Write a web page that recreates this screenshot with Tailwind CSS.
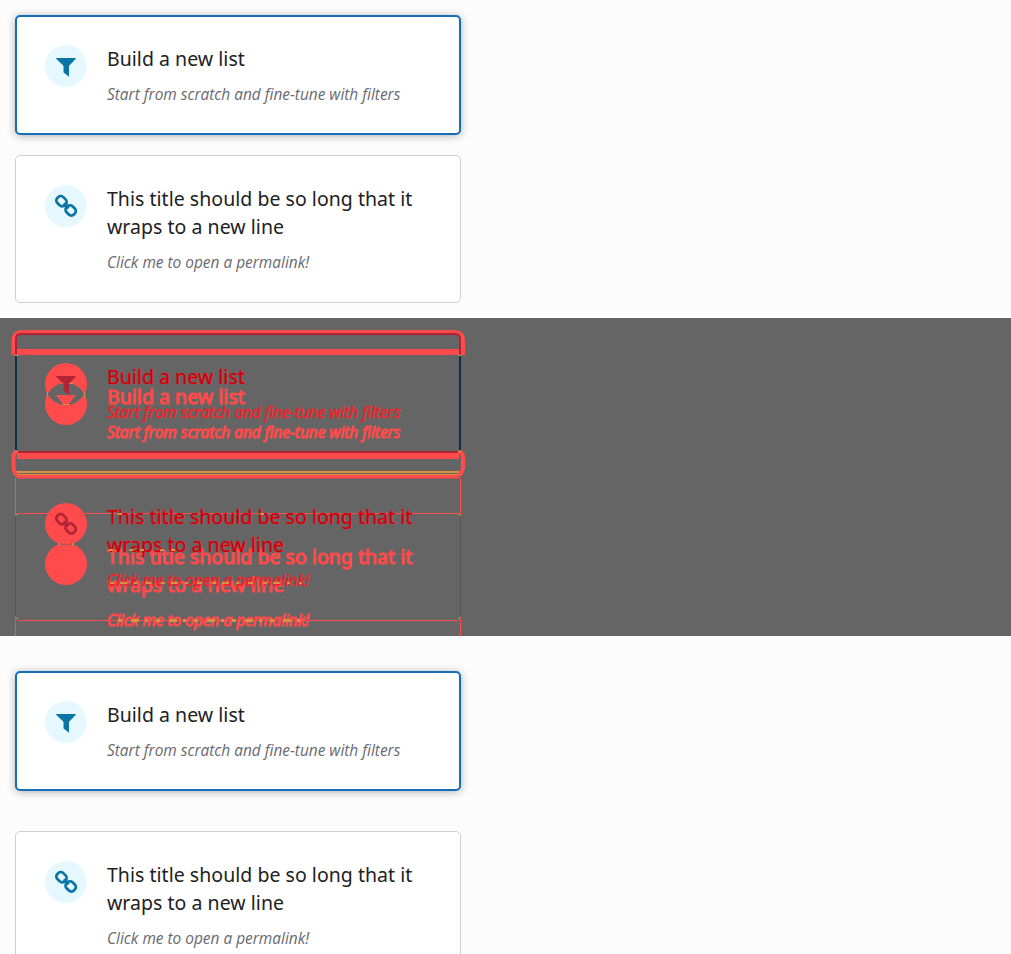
<!DOCTYPE html>
<html lang="en">
<head>
<meta charset="utf-8">
<title>List cards</title>
<script src="https://cdn.jsdelivr.net/npm/@tailwindcss/browser@4"></script>
</head>
<body class="bg-[#fcfcfc] font-['Open_Sans',sans-serif] text-[#212121]">
<svg class="hidden">
  <symbol id="funnel" viewBox="0 0 42 42"><path d="M11.300 13h19.400v1L24 20.800V31.800l-5.500-4.300V20.800L11.300 14z"/></symbol>
  <symbol id="chain" viewBox="0 0 42 42"><g fill="none" stroke="currentColor" stroke-width="2.700" transform="rotate(45 21 21)"><rect x="9.200" y="16.600" width="10.400" height="8.400" rx="3.600"/><rect x="22.200" y="16.600" width="10.400" height="8.400" rx="3.600"/><path d="M17.500 20.800h7"/></g></symbol>
</svg>
<main class="flex h-[954px] flex-col overflow-hidden">
  <section class="flex h-[318px] shrink-0 flex-col gap-5 p-[15px]">
    <article class="flex h-[120px] w-[446px] shrink-0 gap-5 rounded-[5px] border-2 border-[#146fb8] bg-white p-7 shadow-[0_1px_8px_rgba(0,0,0,0.3)]">
      <svg class="size-[42px] shrink-0 rounded-full bg-[#e6f8ff] fill-[#0875a5]"><use href="#funnel"/></svg>
      <div><h2 class="font-['Noto_Sans',sans-serif] text-[19.5px] leading-7 tracking-[0.03px]">Build a new list</h2><p class="mt-[11px] text-[15.43px] leading-[21px] text-[#686870] italic">Start from scratch and fine-tune with filters</p></div>
    </article>
    <article class="flex h-[148px] w-[446px] shrink-0 gap-5 rounded-[5px] border border-[#cfcfd1] bg-white p-[29px]">
      <svg class="size-[42px] shrink-0 rounded-full bg-[#e6f8ff] text-[#0875a5]"><use href="#chain"/></svg>
      <div><h2 class="font-['Noto_Sans',sans-serif] text-[19.5px] leading-7 tracking-[0.03px]">This title should be so long that it<br>wraps to a new line</h2><p class="mt-[11px] text-[15.43px] leading-[21px] text-[#686870] italic">Click me to open a permalink!</p></div>
    </article>
  </section>

  <section class="relative h-[318px] shrink-0 overflow-hidden bg-[#656565]">
    <!-- Changed edges of the overlaid cards -->
    <svg class="absolute inset-0" width="480" height="318" fill="none">
      <g stroke="#ff4b4b">
        <path stroke-width="4" d="M13.500 37V23q0-9 9-9H454q9 0 9 9v14M17 133q-3.500 2-3.500 6v9q0 8 6 10.500M459 133q4 2 4 6v9q0 8-6 10.500"/>
        <path stroke-width="6" d="M17 34H459M17 138H459"/>
        <path stroke-width="4" d="M17 158.500H459"/>
        <path d="M15.500 160v37M460.500 160v37M15.500 301v17M460.500 301v17M18 195.500H458M18 302.500H458"/>
      </g>
      <path stroke="#b12436" stroke-width="2" d="M16 36V21q0-5 5-5H455q5 0 5 5v15M18 134H458"/>
      <path stroke="#0c304c" stroke-width="2" d="M16 37v95M460 37v95"/>
      <path stroke="#555" d="M15.500 199v99M460.500 199v99"/>
      <path stroke="#dc9140" d="M17 153.500H459M17 154.500H459M18 156.500H458M15 37.500h3M458 37.500h3M15 133.500h3M458 133.500h3M15 197l3-1M461 197l-3-1M15 299l3 2M461 299l-3 2"/>
      <g fill="#ff4b4b">
        <path fill-rule="evenodd" d="M45 66a21 21 0 1 1 42 0a21 21 0 1 1-42 0zM45 86a21 21 0 1 1 42 0a21 21 0 1 1-42 0z"/>
        <path d="M56 77h20L69 86h-6z"/>
        <circle cx="66" cy="206" r="21"/><circle cx="66" cy="246" r="21"/>
      </g>
      <path fill="#656565" d="M60 225q6 3 12 0v2q-6-2-12 0z"/>
      <path stroke="#dc9140" d="M62 65.500h2M68 65.500h5M47.500 74v5M84.500 74v5M63 86.500h6M59.500 225v3M72.500 225v3"/>
    </svg>
    <svg class="absolute top-[45px] left-[45px] size-[42px] fill-[#b12436]"><use href="#funnel"/></svg>
    <svg class="absolute top-[185px] left-[45px] size-[42px] text-[#b12436]"><use href="#chain"/></svg>
    <div class="absolute top-[65px] left-[107px] whitespace-nowrap text-[#ff4b4b] [-webkit-text-stroke:1.1px_#ff4b4b]"><h2 class="font-['Noto_Sans',sans-serif] text-[19.5px] leading-7 tracking-[0.03px]">Build a new list</h2><p class="mt-[11px] text-[15.43px] leading-[21px] italic">Start from scratch and fine-tune with filters</p></div>
    <div class="absolute top-[225px] left-[107px] whitespace-nowrap text-[#ff4b4b] [-webkit-text-stroke:1.1px_#ff4b4b]"><h2 class="font-['Noto_Sans',sans-serif] text-[19.5px] leading-7 tracking-[0.03px]">This title should be so long that it<br>wraps to a new line</h2><p class="mt-[11px] text-[15.43px] leading-[21px] italic">Click me to open a permalink!</p></div>
    <div class="absolute top-[45px] left-[107px] whitespace-nowrap text-[#c4000c] [paint-order:stroke]"><h2 class="font-['Noto_Sans',sans-serif] text-[19.5px] leading-7 tracking-[0.03px] [-webkit-text-stroke:0.7px_#f03034]">Build a new list</h2><p class="mt-[11px] text-[15.43px] leading-[21px] text-[#dc2026] italic [-webkit-text-stroke:0.7px_#f43a3e]">Start from scratch and fine-tune with filters</p></div>
    <div class="absolute top-[185px] left-[107px] whitespace-nowrap text-[#c4000c] [paint-order:stroke]"><h2 class="font-['Noto_Sans',sans-serif] text-[19.5px] leading-7 tracking-[0.03px] [-webkit-text-stroke:0.7px_#f03034]">This title should be so long that it<br>wraps to a new line</h2><p class="mt-[11px] text-[15.43px] leading-[21px] text-[#dc2026] italic [-webkit-text-stroke:0.7px_#f43a3e]">Click me to open a permalink!</p></div>
    <!-- Antialiased pixels where the two text layers cross -->
    <svg class="absolute inset-0" width="480" height="318" fill="none" stroke="#d49343">
      <path stroke-width="2" stroke-dasharray="4 6 7 7 3 9 5 10" d="M110 265H302"/>
      <path stroke-width="3" stroke-dasharray="4 9 8 6 3 8" d="M118 302.500H304"/>
      <path stroke-width="2" stroke-dasharray="4 16 4 7" d="M109 232H175"/>
      <path stroke-width="2" stroke-dasharray="4 138" d="M118 196H265"/>
    </svg>
  </section>

  <section class="flex h-[318px] shrink-0 flex-col gap-10 overflow-hidden px-[15px] pt-[35px]">
    <article class="flex h-[120px] w-[446px] shrink-0 gap-5 rounded-[5px] border-2 border-[#146fb8] bg-white p-7 shadow-[0_1px_8px_rgba(0,0,0,0.3)]">
      <svg class="size-[42px] shrink-0 rounded-full bg-[#e6f8ff] fill-[#0875a5]"><use href="#funnel"/></svg>
      <div><h2 class="font-['Noto_Sans',sans-serif] text-[19.5px] leading-7 tracking-[0.03px]">Build a new list</h2><p class="mt-[11px] text-[15.43px] leading-[21px] text-[#686870] italic">Start from scratch and fine-tune with filters</p></div>
    </article>
    <article class="flex h-[148px] w-[446px] shrink-0 gap-5 rounded-[5px] border border-[#cfcfd1] bg-white p-[29px]">
      <svg class="size-[42px] shrink-0 rounded-full bg-[#e6f8ff] text-[#0875a5]"><use href="#chain"/></svg>
      <div><h2 class="font-['Noto_Sans',sans-serif] text-[19.5px] leading-7 tracking-[0.03px]">This title should be so long that it<br>wraps to a new line</h2><p class="mt-[11px] text-[15.43px] leading-[21px] text-[#686870] italic">Click me to open a permalink!</p></div>
    </article>
  </section>
</main>
</body>
</html>
